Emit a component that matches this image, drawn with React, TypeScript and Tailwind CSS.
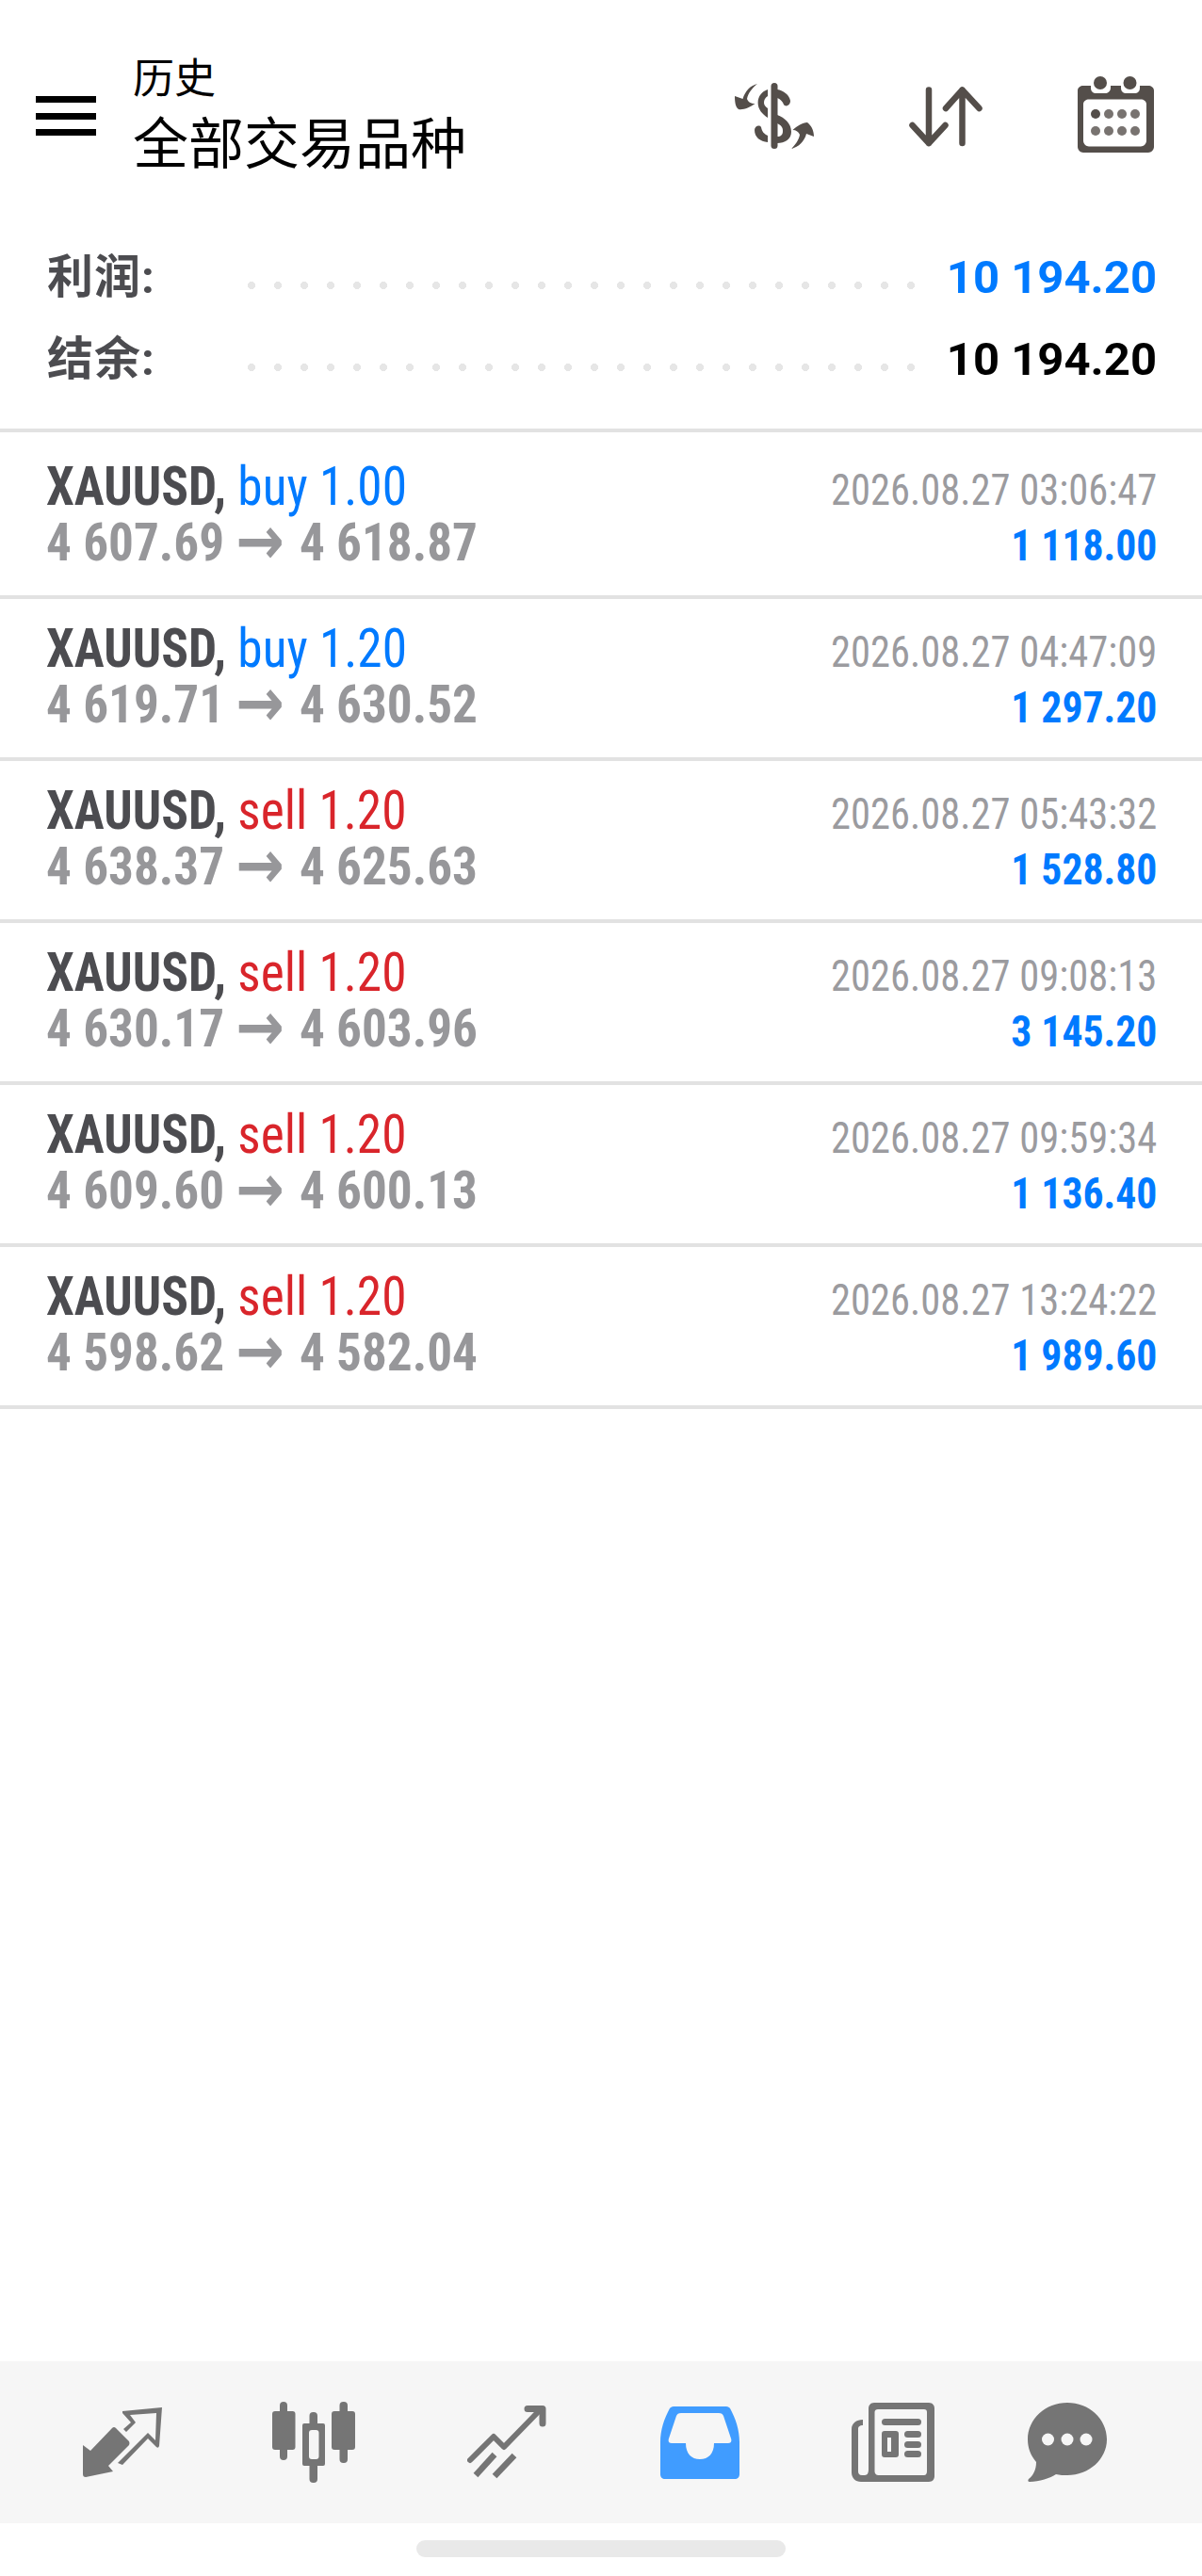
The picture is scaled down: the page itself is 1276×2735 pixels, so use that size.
const rows = [
  { side: "buy", lot: "1.00", open: "4 607.69", close: "4 618.87", time: "2026.08.27 03:06:47", profit: "1 118.00" },
  { side: "buy", lot: "1.20", open: "4 619.71", close: "4 630.52", time: "2026.08.27 04:47:09", profit: "1 297.20" },
  { side: "sell", lot: "1.20", open: "4 638.37", close: "4 625.63", time: "2026.08.27 05:43:32", profit: "1 528.80" },
  { side: "sell", lot: "1.20", open: "4 630.17", close: "4 603.96", time: "2026.08.27 09:08:13", profit: "3 145.20" },
  { side: "sell", lot: "1.20", open: "4 609.60", close: "4 600.13", time: "2026.08.27 09:59:34", profit: "1 136.40" },
  { side: "sell", lot: "1.20", open: "4 598.62", close: "4 582.04", time: "2026.08.27 13:24:22", profit: "1 989.60" },
];

function Dots() {
  return <div className="mt-[29px] h-[8px] w-[728px] bg-[radial-gradient(circle,#e6e6e6_3.8px,transparent_4.3px)] bg-[length:28px_8px]" />;
}

function SwapDollarIcon() {
  return (
    <svg width="84" height="70" viewBox="0 0 84 70" fill="#544e4a">
      <rect x="38.500" y="0" width="7" height="70" rx="3.500" />
      <path d="M35 7C29 9 24.600 14 24.600 21C24.600 28 29 33 35 37L35 27C32 25 31 23 31 21C31 18 32 16 35 14z" />
      <path d="M45 7C52 8 58 13 59 19C59 24 54 26 52 23C51 20 48 17 45 16z" />
      <path fillRule="evenodd" d="M45 34C53 37 60 43 60 52C60 60 53 64 45 64L45 57C49 57 51 55 51 51C51 47 49 45 45 43z" />
      <path d="M35 63C27 62 21 58 21 50C21 46 26 44 28 47C29 52 31 54 35 56z" />
      <path d="M24 1C16 3 11 9 8.500 17L0 14C0 21 1 26 4 28C9 29 16 26 21.500 22C17 22 14 20 13 17C14 11 19 5 24 1z" />
      <path d="M60 70C68 68 74 62 76 54L84 57C84 50 81 45 77 42C72 42 66 46 61.500 50C65 50 68 52 69 55C68 61 64 66 60 70z" />
    </svg>
  );
}

function SortArrowsIcon() {
  return (
    <svg width="78" height="64" viewBox="0 0 78 64" fill="none" stroke="#544e4a" strokeWidth="6.500" strokeLinecap="round" strokeLinejoin="round">
      <path d="M21 3.500V60M3.500 41L21 60L38.500 41" />
      <path d="M56.500 60V3.500M39 23L56.500 3.500L74.500 23" />
    </svg>
  );
}

function CalendarIcon() {
  return (
    <svg width="81" height="81" viewBox="0 0 81 81">
      <path
        fillRule="evenodd"
        fill="#544e4a"
        d="M6 10h8v2c0 4 2 6 6 6h9c3 0 6-2 6-6v-2h11v2c0 4 2 6 6 6h8c4 0 6-2 6-6v-2h9c3 0 6 2 6 5v60c0 3-3 6-6 6H6c-3 0-6-3-6-6V15c0-3 3-5 6-5zM12 24.500c-3 0-6 2-6 5v39c0 3 3 6 6 6h55c3 0 6-3 6-6v-39c0-3-3-5-6-5z"
      />
      <circle cx="24" cy="7" r="7" fill="#544e4a" />
      <circle cx="55.500" cy="7" r="7" fill="#544e4a" />
      <circle cx="19" cy="40" r="5" fill="#544e4a" />
      {[33, 47, 61].map((x) => <circle key={x} cx={x} cy="40" r="5" fill="#787370" />)}
      {[19, 33, 47, 61].map((x) => <circle key={x} cx={x} cy="58" r="5" fill="#787370" />)}
    </svg>
  );
}

function TradeIcon() {
  return (
    <svg width="84" height="74" viewBox="0 0 84 74" fill="#757575">
      <path d="M0 40L8 46L31 22Q33 20 35 22L49 36Q50 38 49 40L27 62L32 68L3 74Q0 74 0 71z" />
      <path d="M42 4L84 0L81 41Q80 44 78 42L69 33L42 61L37 59L69 27L77 35L78 6L50 8L56 16L46 26L43 23L51 16L42 6z" />
    </svg>
  );
}

function CandlesIcon() {
  return (
    <svg width="88" height="87" viewBox="0 0 88 87" fill="#757575">
      <rect x="8" y="0" width="8" height="62" rx="4" />
      <rect x="0" y="10" width="24.500" height="41" rx="3" />
      <rect x="39.500" y="11" width="8.500" height="75" rx="4" />
      <rect x="32" y="23" width="24" height="45" rx="2" />
      <rect x="39" y="30" width="10.500" height="31" rx="3" fill="#f6f6f6" />
      <rect x="71.500" y="0" width="8.500" height="65" rx="4" />
      <rect x="63" y="10" width="25" height="41" rx="3" />
    </svg>
  );
}

function ChartIcon() {
  return (
    <svg width="84" height="78" viewBox="0 0 84 78" fill="none" stroke="#757575" strokeWidth="6" strokeLinejoin="round">
      <path strokeLinecap="round" d="M3 58L28 33L39 44L76 6" />
      <path strokeLinecap="round" strokeWidth="7" d="M64 3.500H80V19" />
      <path strokeWidth="6.500" d="M9 74L29 52M29 75L50 53" />
    </svg>
  );
}

function InboxIcon() {
  return (
    <svg width="84" height="77" viewBox="0 0 84 77">
      <path
        fillRule="evenodd"
        fill="#409cff"
        d="M14 0h56c2 0 3 1 4 2 6 11 10 23 10 36v34c0 3-2 5-5 5H5c-3 0-5-2-5-5V38C0 25 4 13 10 2c1-1 2-2 4-2zM22 7c-3 0-4 1-5 3L9 34c-1 3 0 5 3 5h15c0 11 6 17 15 17s15-6 15-17h15c3 0 4-2 3-5L67 10c-1-2-2-3-5-3z"
      />
    </svg>
  );
}

function NewsIcon() {
  return (
    <svg width="88" height="84" viewBox="0 0 88 84" fill="#757575">
      <path
        fillRule="evenodd"
        d="M12 18c-7 0-12 4-12 10v46c0 6 4 10 10 10h72c4 0 6-3 6-6V6c0-3-2-6-6-6H24c-4 0-6 3-6 6v65c0 3-1 6-4 6h-3c-3 0-4-2-4-4V28c0-3 2-4 5-4zM28 7c-2 0-3.500 1-3.500 3v63c0 2 1.500 4 4 4h48.500c2 0 3-2 3-4V10c0-2-1-3-3-3z"
      />
      <rect x="32" y="17" width="42" height="7" rx="3.500" />
      <path fillRule="evenodd" d="M35 30h12c2 0 3 1 3 3v22c0 2-1 3-3 3H35c-2 0-3-1-3-3V33c0-2 1-3 3-3zm3 7v15h4V37z" />
      <rect x="56" y="30" width="18" height="7" rx="3.500" />
      <rect x="56" y="41" width="18" height="7" rx="3.500" />
      <rect x="56" y="51" width="18" height="7" rx="3.500" />
    </svg>
  );
}

function ChatIcon() {
  return (
    <svg width="84" height="84" viewBox="0 0 84 84">
      <path fill="#757575" d="M42 0C65 0 84 17 84 39C84 60 65 77 42 77C38 77 34 77 30 76C24 80 12 84 2 84C0 84 0 82 1 81C6 77 9 71 9 63C3 56 0 48 0 39C0 17 19 0 42 0z" />
      <ellipse cx="21.500" cy="39" rx="6.500" ry="6.500" fill="#f6f6f6" />
      <ellipse cx="42" cy="39" rx="6.500" ry="6.500" fill="#f6f6f6" />
      <ellipse cx="62" cy="39" rx="6.500" ry="6.500" fill="#f6f6f6" />
    </svg>
  );
}

export default function App() {
  return (
    <div className="flex min-h-[2735px] flex-col bg-white font-['Roboto','Noto_Sans_CJK_SC',sans-serif]">
      <header className="flex h-[212px] items-start">
        <div className="ml-[38px] mt-[102px] flex h-[42px] w-[64px] flex-col justify-between">
          <span className="h-[7px] bg-black" />
          <span className="h-[7px] bg-black" />
          <span className="h-[7px] bg-black" />
        </div>
        <div className="ml-[39px] mt-[62px] flex flex-col">
          <span className="text-[44px] leading-[44px] text-black">历史</span>
          <span className="mt-[17px] text-[59px] leading-[62px] text-black">全部交易品种</span>
        </div>
        <div className="ml-auto mr-[51px] mt-[81px] flex items-start">
          <div className="mt-[7px]"><SwapDollarIcon /></div>
          <div className="ml-[101px] mt-[11px]"><SortArrowsIcon /></div>
          <div className="ml-[101px]"><CalendarIcon /></div>
        </div>
      </header>

      <section className="flex h-[243px] flex-col pl-[50px] pr-[48px] pt-[58px]">
        <div className="flex h-[87px] items-start">
          <span className="w-[203px] text-[49px] font-bold leading-[50px] tracking-[1px] text-[#4c4c50]">利润:</span>
          <Dots />
          <span className="ml-auto text-[49px] font-bold leading-[50px] text-[#007aff]">10 194.20</span>
        </div>
        <div className="flex items-start">
          <span className="w-[203px] text-[49px] font-bold leading-[50px] tracking-[1px] text-[#4c4c50]">结余:</span>
          <Dots />
          <span className="ml-auto text-[49px] font-bold leading-[50px] text-black">10 194.20</span>
        </div>
      </section>

      <div className="h-[4px] bg-[#e2e2e2]" />

      {rows.map((r, i) => (
        <div
          key={r.time}
          className={`flex flex-col border-b-[4px] border-[#e2e2e2] pl-[49px] pr-[48px] [font-stretch:75%] ${i === 0 ? "h-[177px] pt-[28px]" : "h-[172px] pt-[23px]"}`}
        >
          <div className="flex h-[60px] items-baseline justify-between">
            <span className="inline-block origin-left scale-x-[0.92] whitespace-nowrap text-[58px] leading-[59px]">
              <span className="font-bold text-[#4c4c50]">XAUUSD, </span>
              <span className={r.side === "buy" ? "text-[#007aff]" : "text-[#d9252b]"}>{r.side} {r.lot}</span>
            </span>
            <span className="inline-block origin-right scale-x-[0.925] whitespace-nowrap text-[46px] leading-[59px] text-[#9b9b9f]">{r.time}</span>
          </div>
          <div className="flex h-[59px] items-baseline justify-between">
            <span className="inline-block origin-left scale-x-[0.95] whitespace-nowrap text-[56px] font-bold leading-[59px] text-[#97979a]">
              {r.open} <span className="mr-[4px] align-[-4px] font-['DejaVu_Sans'] text-[72px] leading-[0]">→</span> {r.close}
            </span>
            <span className="inline-block origin-right scale-x-[0.95] whitespace-nowrap text-[46px] font-bold leading-[59px] text-[#007aff]">{r.profit}</span>
          </div>
        </div>
      ))}

      <div className="flex-1" />

      <nav className="flex h-[172px] items-center bg-[#f6f6f6] pl-[88px]">
        <TradeIcon />
        <div className="ml-[117px]"><CandlesIcon /></div>
        <div className="ml-[119px]"><ChartIcon /></div>
        <div className="ml-[121px]"><InboxIcon /></div>
        <div className="ml-[119px]"><NewsIcon /></div>
        <div className="ml-[99px]"><ChatIcon /></div>
      </nav>
      <div className="flex h-[56px] justify-center pt-[18px]">
        <div className="h-[18px] w-[392px] rounded-full bg-[#e9e9e9]" />
      </div>
    </div>
  );
}
